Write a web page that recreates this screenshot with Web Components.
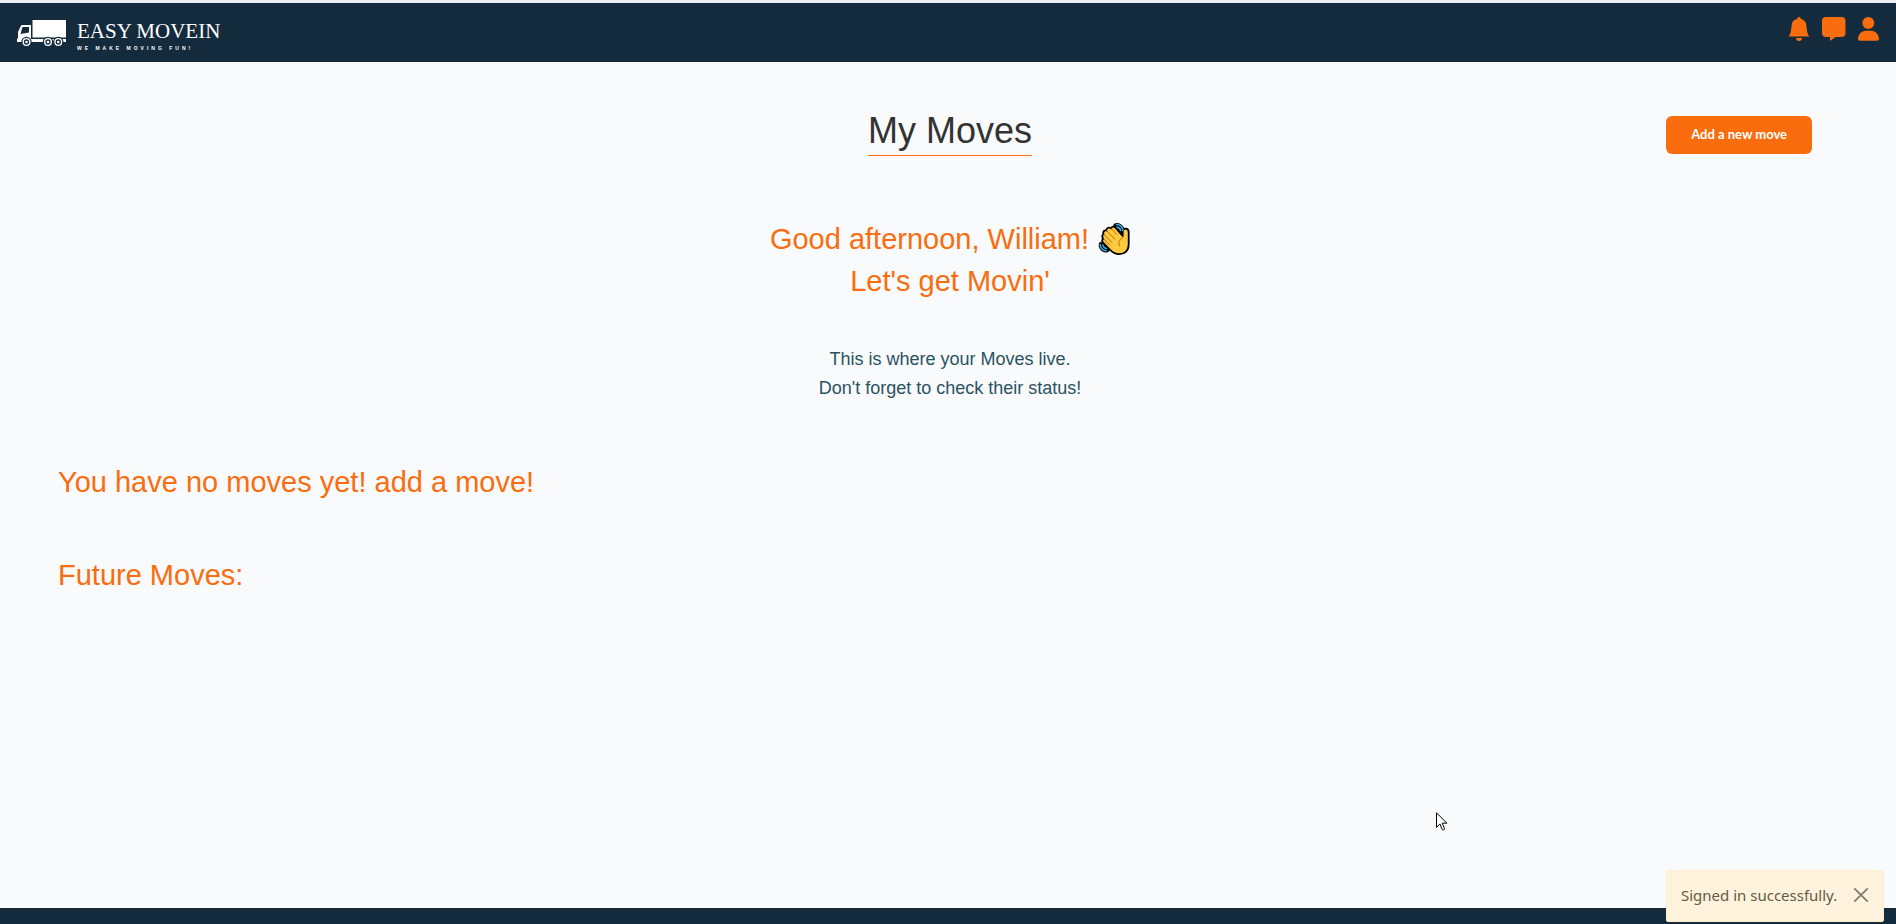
<!DOCTYPE html>
<html lang="en">
<head>
<meta charset="utf-8">
<meta name="viewport" content="width=device-width, initial-scale=1">
<title>My Moves - Easy Movein</title>
<style>
  :root { --navy: #132b3d; --orange: #f96d0f; --page: #f8fafc; }
  body { margin: 0; background: var(--page); font-family: "Liberation Sans", Arial, sans-serif; }
</style>
</head>
<body>
<moves-app>
  <site-header></site-header>
  <page-title>My Moves</page-title>
  <welcome-message name="William">
    This is where your Moves live.<br>Don't forget to check their status!
  </welcome-message>
  <section-heading>You have no moves yet! add a move!</section-heading>
  <section-heading>Future Moves:</section-heading>
  <site-footer></site-footer>
  <flash-toast>Signed in successfully.</flash-toast>
  <mouse-pointer></mouse-pointer>
</moves-app>

<script>
const define = (name, html, setup) => {
  const template = document.createElement('template');
  template.innerHTML = html;
  customElements.define(name, class extends HTMLElement {
    constructor() {
      super();
      this.attachShadow({ mode: 'open' }).append(template.content.cloneNode(true));
    }
    connectedCallback() { if (setup) setup(this, this.shadowRoot); }
  });
};

define('moves-app', `
  <style>
    :host { display: flex; flex-direction: column; min-height: 100vh; }
    main { flex: 1; padding: 47px 54px 48px 58px; }
  </style>
  <slot name="header"></slot>
  <main><slot></slot></main>
  <slot name="footer"></slot>
  <slot name="overlay"></slot>
`, host => {
  const slots = { 'SITE-HEADER': 'header', 'SITE-FOOTER': 'footer', 'FLASH-TOAST': 'overlay', 'MOUSE-POINTER': 'overlay' };
  for (const child of host.children) if (slots[child.tagName]) child.slot = slots[child.tagName];
});

define('brand-logo', `
  <style>
    :host { display: block; color: #fff; }
    a { display: flex; align-items: flex-start; gap: 11px; color: inherit; text-decoration: none; }
    svg { display: block; width: 49px; height: 27px; padding-top: 3px; }
    .words { display: flex; flex-direction: column; }
    .name { font: 21px/28px "Liberation Serif", serif; white-space: nowrap; }
    .tag { font: bold 5px/6px "Liberation Sans", sans-serif; letter-spacing: 3px; white-space: nowrap; }
  </style>
  <a href="#">
    <svg viewBox="0 0 49 27" aria-hidden="true">
      <path fill="#fff" d="M15.500 0H49V17.500H15.500z"/>
      <path fill="#fff" d="M5 5h9v14H49v3H0v-3l1-1v-6L4 5.500z"/>
      <path fill="#132b3d" d="M5.500 7H12v5.500L3.500 14z"/>
      <g fill="#fff" stroke="#132b3d" stroke-width="1.200">
        <circle cx="9.500" cy="22" r="4.600"/><circle cx="31" cy="22" r="4.600"/><circle cx="41.300" cy="22" r="4.600"/>
      </g>
      <g fill="#fff" stroke="#132b3d" stroke-width="1.300">
        <circle cx="9.500" cy="22" r="2"/><circle cx="31" cy="22" r="2"/><circle cx="41.300" cy="22" r="2"/>
      </g>
    </svg>
    <span class="words"><span class="name">EASY MOVEIN</span><span class="tag">WE MAKE MOVING FUN!</span></span>
  </a>
`);

define('site-header', `
  <style>
    :host { display: block; background: var(--navy); border-top: 3px solid #eceef2; }
    nav { display: flex; justify-content: space-between; align-items: flex-start; height: 59px; padding: 14px 15px 0 17px; box-sizing: border-box; }
    .icons { display: flex; gap: 11px; }
    button { display: block; width: 24px; height: 24px; padding: 0; border: 0; background: none; color: var(--orange); cursor: pointer; }
    svg { display: block; width: 24px; height: 24px; fill: currentColor; }
  </style>
  <nav aria-label="Main">
    <brand-logo></brand-logo>
    <div class="icons">
      <button aria-label="Notifications"><svg viewBox="0 0 16 16"><path d="M8 16a2 2 0 0 0 2-2H6a2 2 0 0 0 2 2m.995-14.901a1 1 0 1 0-1.990 0A5 5 0 0 0 3 6c0 1.098-.5 6-2 7h14c-1.500-1-2-5.902-2-7 0-2.420-1.720-4.440-4.005-4.901"/></svg></button>
      <button aria-label="Messages"><svg viewBox="0 0 24 24"><path d="M4 0h15.500a4 4 0 0 1 4 4v12a4 4 0 0 1-4 4h-6l-5.500 4V20H4a4 4 0 0 1-4-4V4a4 4 0 0 1 4-4z"/></svg></button>
      <button aria-label="Account"><svg viewBox="0 0 24 24"><circle cx="11.300" cy="6" r="6"/><path d="M9 13.700h5c5 0 8 4.500 8 8.300 0 1.200-.8 1.700-2 1.700H3c-1.200 0-2-.5-2-1.700 0-3.800 3-8.300 8-8.300z"/></svg></button>
    </div>
  </nav>
`);

define('page-title', `
  <style>
    :host { display: grid; grid-template-columns: 1fr auto 1fr; align-items: end; }
    h1 { grid-column: 2; margin: 0; padding-bottom: 3px; border-bottom: 1px solid var(--orange); font-size: 36px; line-height: 43px; font-weight: 400; color: #333; }
    button { justify-self: end; margin: 0 30px 2px 0; height: 38px; padding: 0 25px 2px; border: 0; border-radius: 6px; background: var(--orange); color: #fff; font: 700 13px/18px Lato, sans-serif; white-space: nowrap; cursor: pointer; }
  </style>
  <h1><slot></slot></h1>
  <button>Add a new move</button>
`);

define('waving-hand', `
  <style>
    :host { display: block; }
    svg { display: block; width: 32px; height: 34px; }
  </style>
  <svg viewBox="0 0 32 34" role="img" aria-label="waving hand">
    <path d="M15 3.500C16 .5 20 .3 23 2.300 26 4.500 27 7 26.500 10.500L22 12z"/>
    <path d="M1 21C2.500 19 5 20 6 22l6 6c-1 2.500-4.500 3.500-7.500 1.500C1.500 27.500 0 24 1 21z"/>
    <path fill="#ffc83d" stroke="#000" stroke-width="1.800" stroke-linejoin="round" d="M24.700 14V9.500c0-3.800 6-3.800 6 .5V22.500c0 6-4 9.700-9.400 9.700-4 0-6.500-1.500-9-4L5 20.500c-1.600-1.800-.8-3.200.3-3.600C3.600 15 4 13 5.500 12.300 4.500 10 6 8 8.300 8.500 8.500 5.500 11 5 13 6.200 14.300 4 16.200 4.500 17.500 5.700z"/>
    <g fill="none" stroke="#a86a18" stroke-width=".9" stroke-linecap="round">
      <path d="M5.800 17l6 6M6 12.500l8 8M8.500 8.700l8.500 8.600M13 6.500l6 6M25 15.500c-3.800 2-5 5-3.500 8.500"/>
    </g>
    <g fill="none" stroke="#35b8e8" stroke-width="1.500" stroke-linecap="round">
      <path d="M18.500 2.600c3.500 0 6 2.400 6.400 5.900M19 5.300c2 .2 3.200 1.300 3.600 3.200M2.200 22.500c.2 3.500 2.500 6 6 6.300M4.900 23c.3 2 1.600 3.200 3.600 3.400"/>
    </g>
  </svg>
`);

define('welcome-message', `
  <style>
    :host { display: block; padding-top: 62px; text-align: center; }
    h2 { margin: 0; font-size: 29px; line-height: 42px; font-weight: 400; color: var(--orange); }
    .greeting { display: flex; justify-content: center; align-items: center; gap: 9px; }
    p { margin: 43px 0 4px; font-size: 18px; line-height: 29px; color: #2b5362; }
  </style>
  <h2><span class="greeting"><span id="hello"></span><waving-hand></waving-hand></span>Let's get Movin'</h2>
  <p><slot></slot></p>
`, (host, root) => {
  root.getElementById('hello').textContent = 'Good afternoon, ' + host.getAttribute('name') + '!';
});

define('section-heading', `
  <style>
    :host { display: block; padding-top: 58px; }
    h2 { margin: 0; font-size: 29px; line-height: 35px; font-weight: 400; color: var(--orange); }
  </style>
  <h2><slot></slot></h2>
`);

define('site-footer', `
  <style>
    :host { display: block; }
    footer { height: 16px; background: var(--navy); }
  </style>
  <footer></footer>
`);

define('flash-toast', `
  <style>
    :host { position: fixed; right: 12px; bottom: 2px; display: flex; align-items: center; justify-content: space-between; width: 218px; height: 52px; padding: 0 15px 2px 14px; box-sizing: border-box; border: 1px solid #ffecca; border-radius: 2px; background: #fff3de; }
    span { font: 15px/22px "Noto Sans", sans-serif; color: #665a42; white-space: nowrap; }
    button { display: block; padding: 0; border: 0; background: none; color: #807b70; cursor: pointer; }
    svg { display: block; width: 14px; height: 14px; }
  </style>
  <span role="status"><slot></slot></span>
  <button aria-label="Close"><svg viewBox="0 0 14 14" fill="none" stroke="currentColor" stroke-width="1.700" stroke-linecap="round"><path d="M.8.8l12.400 12.400M13.200.8L.8 13.200"/></svg></button>
`);

define('mouse-pointer', `
  <style>
    :host { position: fixed; left: 1436px; top: 812px; pointer-events: none; }
    svg { display: block; width: 12px; height: 19px; }
  </style>
  <svg viewBox="0 0 12 19" aria-hidden="true"><path fill="#fff" stroke="#000" d="M.5.8v14.500l3.400-3.300 2.300 5.500c.5 1 2.700.2 2.300-.9L6.200 11.200h4.700z"/></svg>
`);
</script>
</body>
</html>
